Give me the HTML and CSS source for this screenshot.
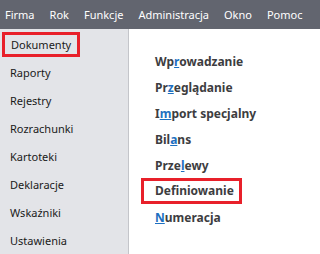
FILE: index.html
```html
<!DOCTYPE html>
<html lang="pl">
<head>
<meta charset="UTF-8">
<title>Menu</title>
<link rel="stylesheet" href="styles.css">
</head>
<body>
<div class="menubar">
<span>Firma</span>
<span>Rok</span>
<span>Funkcje</span>
<span>Administracja</span>
<span>Okno</span>
<span>Pomoc</span>
</div>
<div class="main">
<div class="sidebar">
<div class="item marked">Dokumenty</div>
<div class="item">Raporty</div>
<div class="item">Rejestry</div>
<div class="item">Rozrachunki</div>
<div class="item">Kartoteki</div>
<div class="item">Deklaracje</div>
<div class="item">Wskaźniki</div>
<div class="item">Ustawienia</div>
</div>
<div class="content">
<div class="entry">Wp<u>r</u>owadzanie</div>
<div class="entry">Pr<u>z</u>eglądanie</div>
<div class="entry">I<u>m</u>port specjalny</div>
<div class="entry">Bil<u>a</u>ns</div>
<div class="entry">Prze<u>l</u>ewy</div>
<div class="entry marked">Def<u>i</u>niowanie</div>
<div class="entry"><u>N</u>umeracja</div>
</div>
</div>
</body>
</html>
```

FILE: styles.css
```css
body {
margin: 0;
font-family: "Noto Sans", "Open Sans", sans-serif;
font-size: 11px;
background: #fff;
overflow: hidden;
}
.menubar {
height: 29px;
background: #62656f;
color: #fff;
display: flex;
align-items: center;
padding-left: 5px;
gap: 15px;
}
.main {
display: flex;
height: 225px;
}
.sidebar {
width: 128px;
background: #e3e4e8;
border-right: 1px solid #c4c5ca;
padding-top: 2px;
}
.item {
height: 28px;
line-height: 28px;
padding-left: 10px;
color: #1a1a1a;
}
.sidebar .marked {
width: 66px;
height: 19px;
line-height: 19px;
margin: 1px 0 2px 2px;
padding-left: 6px;
border: 3px solid #e8202a;
}
.content {
padding-left: 26px;
padding-top: 20px;
}
.entry {
height: 26px;
line-height: 26px;
font-size: 12px;
font-weight: bold;
color: #3d3d3f;
}
.entry u {
color: #1d6fc0;
}
.content .marked {
width: 84px;
height: 20px;
line-height: 20px;
margin: -1px 0 1px -14px;
padding-left: 11px;
border: 3px solid #e8202a;
}
```
